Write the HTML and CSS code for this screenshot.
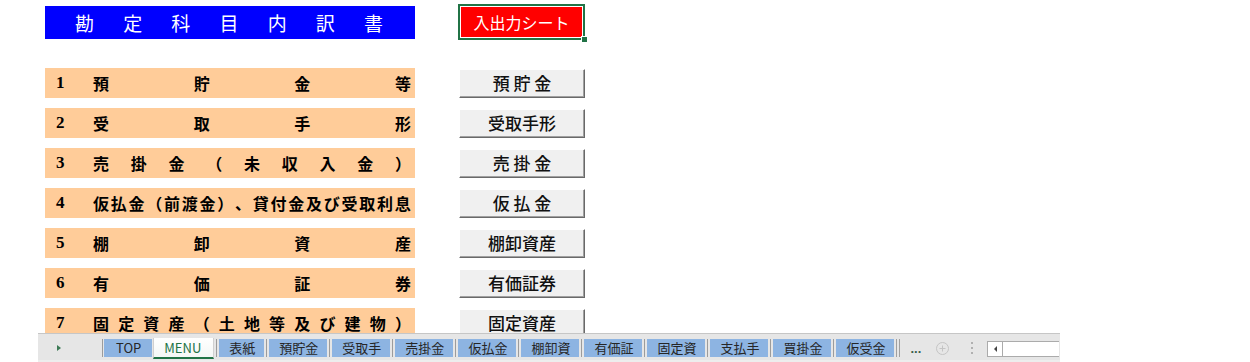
FILE: index.html
```html
<!DOCTYPE html>
<html lang="ja">
<head>
<meta charset="utf-8">
<title>勘定科目内訳書 MENU</title>
<link rel="stylesheet" href="styles.css">
</head>
<body>
<div class="sheet">
  <div class="title"><span>勘</span><span>定</span><span>科</span><span>目</span><span>内</span><span>訳</span><span>書</span></div>
  <div class="io-cell"><div class="io-btn">入出力シート</div><span class="handle"></span></div>

  <div class="row"><span class="num">1</span><span class="label"><span>預</span><span>貯</span><span>金</span><span>等</span></span></div>
  <div class="btn">預 貯 金</div>

  <div class="row"><span class="num">2</span><span class="label"><span>受</span><span>取</span><span>手</span><span>形</span></span></div>
  <div class="btn">受取手形</div>

  <div class="row"><span class="num">3</span><span class="label"><span>売</span><span>掛</span><span>金</span><span>（</span><span>未</span><span>収</span><span>入</span><span>金</span><span>）</span></span></div>
  <div class="btn">売 掛 金</div>

  <div class="row"><span class="num">4</span><span class="label"><span>仮</span><span>払</span><span>金</span><span>（</span><span>前</span><span>渡</span><span>金</span><span>）</span><span>、</span><span>貸</span><span>付</span><span>金</span><span>及</span><span>び</span><span>受</span><span>取</span><span>利</span><span>息</span></span></div>
  <div class="btn">仮 払 金</div>

  <div class="row"><span class="num">5</span><span class="label"><span>棚</span><span>卸</span><span>資</span><span>産</span></span></div>
  <div class="btn">棚卸資産</div>

  <div class="row"><span class="num">6</span><span class="label"><span>有</span><span>価</span><span>証</span><span>券</span></span></div>
  <div class="btn">有価証券</div>

  <div class="row"><span class="num">7</span><span class="label"><span>固</span><span>定</span><span>資</span><span>産</span><span>（</span><span>土</span><span>地</span><span>等</span><span>及</span><span>び</span><span>建</span><span>物</span><span>）</span></span></div>
  <div class="btn">固定資産</div>
</div>

<div class="tabbar">
  <div class="nav"><span class="tri"></span></div>
  <div class="tab first"><span class="tl">TOP</span></div>
  <div class="tab active"><span class="tl">MENU</span></div>
  <div class="tab"><span class="tl">表紙</span></div>
  <div class="tab"><span class="tl">預貯金</span></div>
  <div class="tab"><span class="tl">受取手</span></div>
  <div class="tab"><span class="tl">売掛金</span></div>
  <div class="tab"><span class="tl">仮払金</span></div>
  <div class="tab"><span class="tl">棚卸資</span></div>
  <div class="tab"><span class="tl">有価証</span></div>
  <div class="tab"><span class="tl">固定資</span></div>
  <div class="tab"><span class="tl">支払手</span></div>
  <div class="tab"><span class="tl">買掛金</span></div>
  <div class="tab"><span class="tl">仮受金</span></div>
  <div class="dsep"></div>
  <div class="more">...</div>
  <div class="add"><svg width="13" height="13" viewBox="0 0 13 13"><circle cx="6.5" cy="6.5" r="6" fill="none" stroke="#C4C4C4" stroke-width="1"/><path d="M6.5 3.5v6M3.5 6.5h6" stroke="#C4C4C4" stroke-width="1"/></svg></div>
  <div class="vdots"><span></span><span></span><span></span></div>
  <div class="scroll"><span class="sarrow"><span class="ltri"></span></span></div>
</div>
</body>
</html>
```
FILE: styles.css
```css
html, body {
  margin: 0;
  padding: 0;
  background: #ffffff;
}
body {
  width: 1250px;
  height: 362px;
  overflow: hidden;
  font-family: "Noto Sans CJK JP", "Noto Sans", sans-serif;
}
.sheet {
  display: grid;
  grid-template-columns: 370px 126px;
  column-gap: 44px;
  row-gap: 10px;
  padding: 4px 0 0 45px;
  align-items: center;
}
.title {
  height: 33px;
  background: #0000FF;
  color: #ffffff;
  font-size: 19px;
  line-height: 33px;
  display: flex;
  justify-content: space-between;
  padding: 0 32px 0 30px;
  margin-bottom: 18px;
}
.io-cell {
  position: relative;
  width: 127px;
  height: 36px;
  margin-left: -1px;
  box-sizing: border-box;
  border: 2px solid #217346;
  padding: 1px;
  background: #ffffff;
  align-self: start;
  margin-bottom: 18px;
}
.io-btn {
  height: 100%;
  background: #FF0000;
  color: #ffffff;
  font-size: 16px;
  line-height: 30px;
  text-align: center;
}
.handle {
  position: absolute;
  right: -5px;
  bottom: -5px;
  width: 5px;
  height: 5px;
  background: #217346;
  border: 1px solid #ffffff;
}
.row {
  height: 30px;
  background: #FFCC99;
  display: flex;
  align-items: center;
  color: #000000;
  font-weight: 700;
  font-size: 16px;
}
.num {
  width: 48px;
  box-sizing: border-box;
  padding-left: 11px;
  font-family: "Liberation Serif", serif;
  font-weight: 700;
  font-size: 17px;
}
.label {
  flex: 1;
  display: flex;
  justify-content: space-between;
  padding-right: 4px;
}
.btn {
  height: 29px;
  box-sizing: border-box;
  background: #F0F0F0;
  border-top: 1px solid #ffffff;
  border-left: 1px solid #ffffff;
  border-right: 1px solid #696969;
  border-bottom: 1px solid #696969;
  box-shadow: inset -1px -1px 0 #A0A0A0;
  color: #111111;
  font-size: 17px;
  font-weight: 500;
  line-height: 26px;
  text-align: center;
  white-space: pre;
}
.tabbar {
  position: absolute;
  left: 38px;
  top: 333px;
  width: 1022px;
  height: 29px;
  box-sizing: border-box;
  background: #E6E6E6;
  border-top: 1px solid #C6C6C6;
  border-bottom: 2px solid #EDEDED;
  display: flex;
  align-items: flex-start;
  padding-top: 5px;
  font-size: 13px;
  color: #262626;
}
.nav {
  width: 64px;
  height: 18px;
  box-sizing: border-box;
  padding-left: 19px;
  display: flex;
  align-items: center;
}
.tri {
  width: 0;
  height: 0;
  border-top: 3px solid transparent;
  border-bottom: 3px solid transparent;
  border-left: 4px solid #3C7A55;
}
.tab {
  margin-left: 2px;
  border-left: 1px solid #9C9C9C;
  padding-left: 2px;
  height: 18px;
  display: flex;
}
.tab.first {
  margin-left: 0;
  padding-left: 1px;
}
.tl {
  display: block;
  height: 18px;
  line-height: 18px;
  padding: 0 9px 0 10px;
  background: #8DB4E2;
  white-space: nowrap;
}
.tab.first .tl {
  padding: 0 11px 0 12px;
}
.tab.active {
  margin-left: 0;
  border-left: none;
  padding-left: 1px;
  height: 20px;
  margin-top: -1px;
}
.tab.active .tl {
  height: 19px;
  line-height: 20px;
  background: linear-gradient(#ffffff, #F4F7F5);
  color: #217346;
  border-left: 1px solid #D0D0D0;
  border-right: 1px solid #D0D0D0;
  border-bottom: 2px solid #217346;
  padding: 0 12px 0 10px;
}
.dsep {
  margin-left: 2px;
  width: 2px;
  height: 18px;
  border-left: 1px solid #A0A0A0;
  border-right: 1px solid #A0A0A0;
}
.more {
  margin-left: 10px;
  height: 18px;
  line-height: 20px;
  font-weight: 700;
  font-family: "Liberation Sans", sans-serif;
  color: #3A5F4A;
  letter-spacing: 0px;
}
.add {
  margin-left: 15px;
  height: 18px;
  display: flex;
  align-items: center;
}
.vdots {
  margin-left: 22px;
  height: 18px;
  display: flex;
  flex-direction: column;
  justify-content: center;
  gap: 3px;
}
.vdots span {
  width: 2px;
  height: 2px;
  background: #B0B0B0;
}
.scroll {
  margin-left: 14px;
  margin-top: 2px;
  width: 72px;
  height: 16px;
  box-sizing: border-box;
  background: #ffffff;
  border: 1px solid #ABABAB;
  border-right: none;
  display: flex;
}
.sarrow {
  width: 15px;
  height: 14px;
  box-sizing: border-box;
  border-right: 1px solid #ABABAB;
  display: flex;
  align-items: center;
  justify-content: center;
}
.ltri {
  width: 0;
  height: 0;
  border-top: 3px solid transparent;
  border-bottom: 3px solid transparent;
  border-right: 3px solid #444444;
}
```
